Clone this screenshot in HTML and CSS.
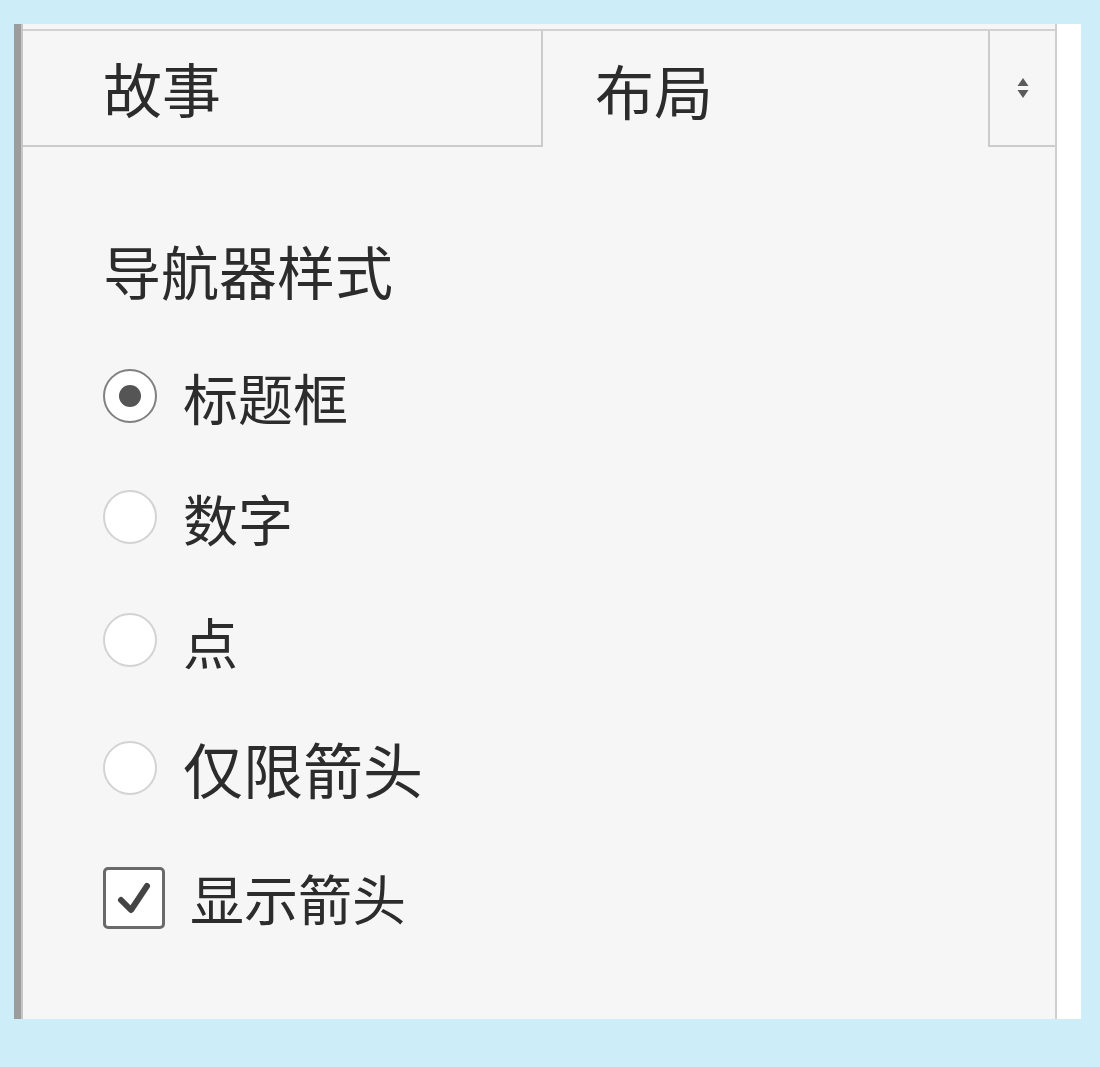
FILE: index.html
```html
<!DOCTYPE html>
<html lang="zh-CN">
<head>
<meta charset="utf-8">
<title>布局</title>
<link rel="stylesheet" href="styles.css">
</head>
<body>
<div class="frame">
  <div class="panel">
    <div class="tabs">
      <div class="tab tab-story">故事</div>
      <div class="tab tab-active">布局</div>
      <div class="tab tab-more">
        <svg width="14" height="24" viewBox="0 0 14 24"><path d="M7 2 L12.5 10 H1.5 Z" fill="#5a5a5a"/><path d="M7 22 L12.5 14 H1.5 Z" fill="#5a5a5a"/></svg>
      </div>
    </div>
    <div class="content">
      <div class="title">导航器样式</div>
      <div class="options">
        <label class="opt opt-a"><span class="radio checked"><span class="dot"></span></span><span class="lbl">标题框</span></label>
        <label class="opt opt-b"><span class="radio"></span><span class="lbl">数字</span></label>
        <label class="opt opt-c"><span class="radio"></span><span class="lbl">点</span></label>
        <label class="opt opt-d"><span class="radio"></span><span class="lbl lbl-big">仅限箭头</span></label>
        <label class="opt opt-e"><span class="check"><svg width="50" height="50" viewBox="0 0 50 50"><path d="M12 27 L22 37 L38 13" fill="none" stroke="#444" stroke-width="6" stroke-linecap="round" stroke-linejoin="round"/></svg></span><span class="lbl lbl-check">显示箭头</span></label>
      </div>
    </div>
  </div>
  <div class="strip"></div>
</div>
</body>
</html>
```
FILE: styles.css
```css
html, body {
  margin: 0;
  padding: 0;
}
body {
  background: #cdedf9;
  font-family: "Noto Sans CJK SC", "Noto Sans", sans-serif;
  color: #2c2c2c;
}
.frame {
  margin: 24px 0 0 14px;
  width: 1067px;
  height: 995px;
  display: flex;
  background: #f3f3f3;
  border-left: 7px solid #9c9c9c;
  box-sizing: border-box;
  box-shadow: inset 2px 0 0 #c6c6c6;
}
.panel {
  flex: 1;
  margin-left: 2px;
  padding-top: 5px;
  background: #f6f6f6;
  border-right: 2px solid #cfcfcf;
  display: flex;
  flex-direction: column;
}
.strip {
  width: 24px;
  background: #ffffff;
}
.tabs {
  display: flex;
  height: 116px;
  border-top: 2px solid #d2d2d2;
}
.tab {
  display: flex;
  align-items: center;
  font-size: 59px;
  line-height: 1;
  box-sizing: border-box;
}
.tab-story {
  width: 520px;
  padding-left: 80px;
  padding-bottom: 2px;
  border-bottom: 2px solid #cccccc;
  border-right: 2px solid #cccccc;
}
.tab-active {
  flex: 1;
  padding-left: 52px;
}
.tab-more {
  width: 67px;
  justify-content: center;
  border-left: 2px solid #cccccc;
  border-bottom: 2px solid #cccccc;
  align-items: flex-start;
  padding-top: 45px;
}
.content {
  padding: 88px 0 0 80px;
  display: flex;
  flex-direction: column;
}
.title {
  font-size: 58px;
  line-height: 70px;
  height: 70px;
}
.options {
  display: flex;
  flex-direction: column;
  margin-top: 60px;
}
.opt {
  display: flex;
  align-items: center;
  height: 62px;
}
.opt-b { margin-top: 59px; }
.opt-c { margin-top: 61px; }
.opt-d { margin-top: 60px; height: 74px; }
.opt-e { margin-top: 60px; height: 66px; }
.radio {
  width: 50px;
  height: 50px;
  border-radius: 50%;
  border: 2px solid #d3d3d3;
  background: #ffffff;
  display: flex;
  align-items: center;
  justify-content: center;
  flex: none;
}
.radio.checked {
  border-color: #808080;
}
.dot {
  width: 22px;
  height: 22px;
  border-radius: 50%;
  background: #555555;
}
.lbl {
  margin-left: 26px;
  font-size: 55px;
  line-height: 1;
}
.lbl-big {
  font-size: 60px;
}
.lbl-check {
  margin-left: 25px;
  font-size: 54px;
}
.check {
  width: 62px;
  height: 62px;
  box-sizing: border-box;
  border: 3px solid #6a6a6a;
  border-radius: 5px;
  background: #ffffff;
  display: flex;
  align-items: center;
  justify-content: center;
  flex: none;
}
```
